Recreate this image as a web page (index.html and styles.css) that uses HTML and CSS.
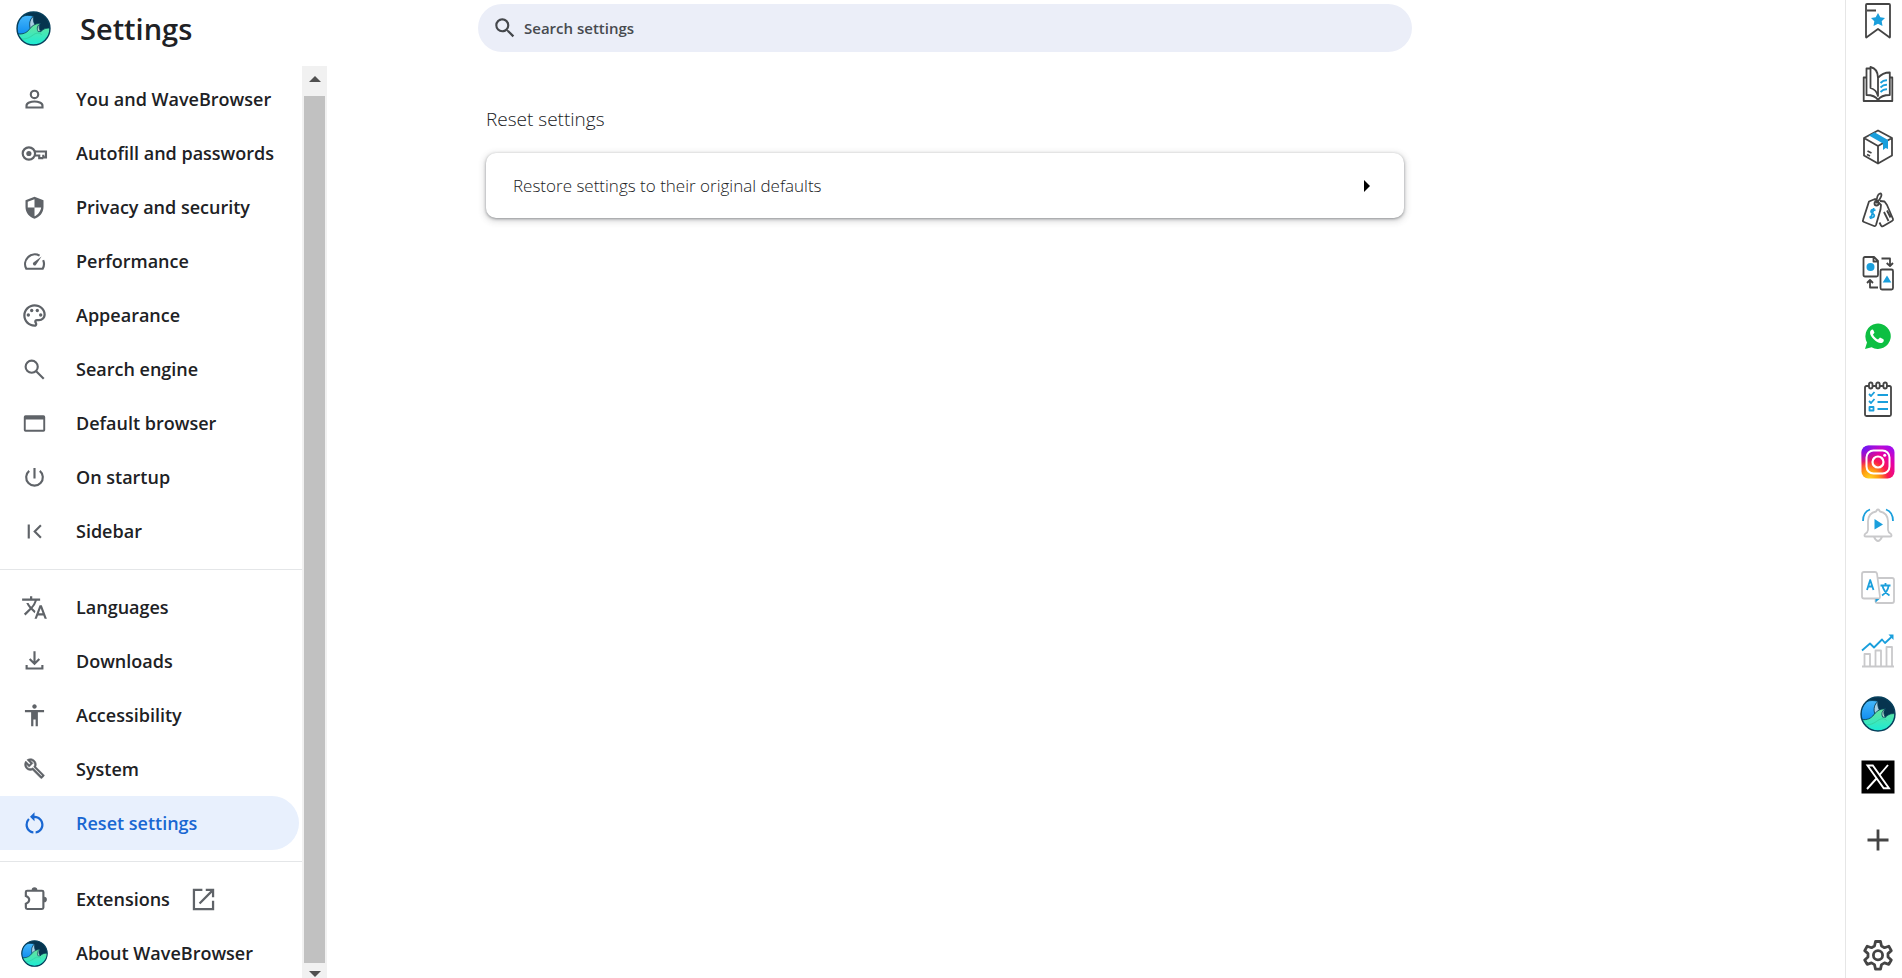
FILE: index.html
```html
<!DOCTYPE html>
<html lang="en">
<head>
  <meta charset="UTF-8" />
  <meta name="viewport" content="width=device-width, initial-scale=1" />
  <title>Settings - Reset settings</title>
  <link rel="stylesheet" href="styles.css">
</head>
<body>

  <!-- Shared logo, used in header, menu and rail -->
  <svg class="defs" width="0" height="0" aria-hidden="true">
    <defs>
      <linearGradient id="waveBlue" x1="0" y1="0" x2="0" y2="1">
        <stop offset="0" stop-color="#45b8fb" />
        <stop offset="1" stop-color="#0f8cf0" />
      </linearGradient>
      <linearGradient id="waveGreen" x1="0" y1="0" x2="0" y2="1">
        <stop offset="0" stop-color="#6be39a" />
        <stop offset="1" stop-color="#17ecd8" />
      </linearGradient>
      <clipPath id="waveClip"><circle cx="17" cy="17" r="16" /></clipPath>
      <symbol id="wave" viewBox="0 0 34 34">
        <circle cx="17" cy="17" r="16" fill="#06344f" />
        <g clip-path="url(#waveClip)" stroke="#07405c" stroke-width=".8">
          <path d="M0 23V12C3 5 9 3 17 5c-3 3-4 7-3 12l-4 5z" fill="url(#waveBlue)" />
          <path d="M17 5c-3.500 3-4.500 7-3 12l4.500-3.500c-1.500-2.500-2-5.500-1.500-8.500z" fill="#a9cfe2" />
          <path d="M0 22c5 1 9 0 12-3 3-4 6-7 12-7-2 2-2 5 0 8 3-3 6-4 11-3v17H0z" fill="url(#waveGreen)" />
          <path d="M24 12c-3.500 2-4 5-2.500 8l2.500 0c-2-3-2-6 0-8z" fill="#b5dfcc" />
          <path d="M3 27c6 1 10-1 14-4 3-2 6-2 8 0" fill="none" stroke="#35cf9e" />
        </g>
        <circle cx="17" cy="17" r="16" fill="none" stroke="#07405c" stroke-width="1.400" />
      </symbol>
    </defs>
  </svg>

  <div class="layout">

    <aside class="sidebar">
      <header class="brand">
        <svg class="brand-logo"><use href="#wave" /></svg>
        <h1>Settings</h1>
      </header>

      <div class="menu-wrap">
        <nav class="menu">
          <a class="item" href="#people">
            <svg viewBox="0 0 24 24" class="line"><circle cx="12" cy="7.500" r="3.300" /><path d="M4.900 19.100v-1.600c0-2.400 4-3.700 7.100-3.700s7.100 1.300 7.100 3.700v1.600z" /></svg>
            <span>You and WaveBrowser</span>
          </a>
          <a class="item" href="#autofill">
            <svg viewBox="0 0 24 24" class="line"><path d="M12.200 10.200H22.200v5.300h-2.400v-2.300M12.200 13.800h4v2.300h3.600" /><circle cx="7" cy="12" r="5.500" /><circle cx="7" cy="12" r="2.300" class="solid" /></svg>
            <span>Autofill and passwords</span>
          </a>
          <a class="item" href="#privacy">
            <svg viewBox="0 0 24 24"><path fill-rule="evenodd" d="M12 2.500 4 5.500v6c0 4.800 3.400 9.200 8 10.500 4.600-1.300 8-5.700 8-10.500v-6zM12 4.700V12H6V6.900zM12 12h5.900c-.5 3.400-2.800 6.600-5.900 7.800z" /></svg>
            <span>Privacy and security</span>
          </a>
          <a class="item" href="#performance">
            <svg viewBox="0 0 24 24" class="line"><path d="M16.500 6.800A8.600 8.600 0 0 0 4.700 18.400h14.600a8.600 8.600 0 0 0 .4-7.600" /><path class="solid" d="M18.300 7.500 13.200 15a1.500 1.500 0 0 1-2.200-2.100z" /></svg>
            <span>Performance</span>
          </a>
          <a class="item" href="#appearance">
            <svg viewBox="0 0 24 24"><path d="M12 22C6.490 22 2 17.510 2 12S6.490 2 12 2s10 4.040 10 9c0 3.310-2.690 6-6 6h-1.770c-.28 0-.5.22-.5.5 0 .12.05.23.13.33.41.47.64 1.060.64 1.670A2.500 2.500 0 0 1 12 22zm0-18c-4.410 0-8 3.590-8 8s3.590 8 8 8c.28 0 .5-.22.5-.5a.54.54 0 0 0-.14-.35c-.41-.46-.63-1.050-.63-1.650a2.500 2.500 0 0 1 2.500-2.500H16c2.210 0 4-1.790 4-4 0-3.860-3.590-7-8-7z" /><circle cx="6.500" cy="11.500" r="1.500" /><circle cx="9.500" cy="7.500" r="1.500" /><circle cx="14.500" cy="7.500" r="1.500" /><circle cx="17.500" cy="11.500" r="1.500" /></svg>
            <span>Appearance</span>
          </a>
          <a class="item" href="#search">
            <svg viewBox="0 0 24 24" class="line"><circle cx="9.500" cy="9.500" r="5.400" /><path d="m13.500 13.500 6.700 6.700" /></svg>
            <span>Search engine</span>
          </a>
          <a class="item" href="#defaultBrowser">
            <svg viewBox="0 0 24 24"><path fill-rule="evenodd" d="M4 4.700h16a1.500 1.500 0 0 1 1.500 1.500v11.600a1.500 1.500 0 0 1-1.500 1.500H4a1.500 1.500 0 0 1-1.500-1.500V6.200A1.500 1.500 0 0 1 4 4.700zM4.200 8.500v9.100h15.600V8.500z" /></svg>
            <span>Default browser</span>
          </a>
          <a class="item" href="#onStartup">
            <svg viewBox="0 0 24 24" class="line"><path d="M12 3.500v9.300M7.300 6.100a7.400 7.400 0 1 0 9.400 0" /></svg>
            <span>On startup</span>
          </a>
          <a class="item" href="#sidebar">
            <svg viewBox="0 0 24 24" class="line"><path d="M6.900 5.800v12.400M17.700 6.500 12.200 12l5.500 5.500" /></svg>
            <span>Sidebar</span>
          </a>

          <hr />

          <a class="item" href="#languages">
            <svg viewBox="0 0 24 24"><path d="M12.870 15.070l-2.540-2.510.03-.03A17.520 17.520 0 0 0 14.070 6H17V4h-7V2H8v2H1v1.990h11.170C11.500 7.920 10.440 9.750 9 11.350 8.070 10.320 7.300 9.190 6.690 8h-2c.73 1.630 1.730 3.170 2.980 4.560l-5.090 5.020L4 19l5-5 3.110 3.110.76-2.040zM18.500 10h-2L12 22h2l1.120-3h4.750L21 22h2l-4.500-12zm-2.620 7l1.620-4.330L19.120 17h-3.240z" /></svg>
            <span>Languages</span>
          </a>
          <a class="item" href="#downloads">
            <svg viewBox="0 0 24 24" class="line"><path d="M12 2.800v11M7.700 9.700l4.300 4.300 4.300-4.300M5 15.100v3.100h14v-3.100" /></svg>
            <span>Downloads</span>
          </a>
          <a class="item" href="#accessibility">
            <svg viewBox="0 0 24 24"><path d="M12 2c1.100 0 2 .9 2 2s-.9 2-2 2-2-.9-2-2 .9-2 2-2zm8.500 7H15v12.500h-2v-6h-2v6H9V9H3.500V7h17v2z" /></svg>
            <span>Accessibility</span>
          </a>
          <a class="item" href="#system">
            <svg viewBox="-3 -2 30 30"><path d="M22.610 18.990l-9.080-9.080c.93-2.340.45-5.100-1.440-7C9.790.61 6.210.4 3.660 2.260L7.500 6.110 6.080 7.520 2.250 3.690C.39 6.230.6 9.820 2.900 12.110c1.860 1.860 4.570 2.350 6.890 1.480l9.110 9.110c.39.39 1.020.39 1.410 0l2.300-2.300c.4-.38.4-1.010 0-1.410zm-3 1.600l-9.460-9.460c-.61.45-1.290.72-2 .82-1.360.2-2.790-.21-3.830-1.250C3.370 9.760 2.930 8.500 3 7.260l3.090 3.090 4.240-4.240-3.090-3.090c1.240-.07 2.490.37 3.440 1.310 1.080 1.080 1.490 2.570 1.240 3.960-.12.71-.42 1.370-.88 1.960l9.450 9.450-.88.89z" stroke="currentColor" stroke-width=".6" /></svg>
            <span>System</span>
          </a>
          <a class="item active" href="#reset" aria-current="page">
            <svg viewBox="0 0 24 24"><path d="M12 5V2L8 6l4 4V7c3.310 0 6 2.690 6 6 0 2.970-2.170 5.430-5 5.910v2.020c3.950-.49 7-3.850 7-7.930 0-4.420-3.580-8-8-8zM6 13c0-1.650.67-3.150 1.760-4.240L6.340 7.340A8.014 8.014 0 0 0 4 13c0 4.080 3.050 7.440 7 7.930v-2.020c-2.830-.48-5-2.940-5-5.910z" /></svg>
            <span>Reset settings</span>
          </a>

          <hr />

          <a class="item" href="#extensions">
            <svg viewBox="0 0 24 24" class="line"><path d="M5.500 4.200h13.200c.8 0 1.200.4 1.200 1.200v13.800c0 .8-.4 1.200-1.200 1.200H5.500c-.8 0-1.200-.4-1.200-1.200v-3.500c4-1.300 4-5.500 0-6.800V5.400c0-.8.4-1.200 1.200-1.200z" /><path class="solid" d="M9.500 3.600a2.500 2.500 0 0 1 5 0zM20.500 9.500a2.500 2.500 0 0 1 0 5z" /></svg>
            <span>Extensions</span>
            <svg viewBox="0 0 24 24" class="line external"><path d="M11 3.500H3.500v17h17V13M14 3.500h6.500V10M20.300 3.700 8.500 15.500" /></svg>
          </a>
          <a class="item" href="#about">
            <svg><use href="#wave" /></svg>
            <span>About WaveBrowser</span>
          </a>
        </nav>

        <div class="scrollbar">
          <button type="button" aria-label="Scroll up"><svg viewBox="0 0 12 6"><path d="M0 6 6 0l6 6z" /></svg></button>
          <div class="thumb"></div>
          <button type="button" class="down" aria-label="Scroll down"><svg viewBox="0 0 12 6"><path d="M0 0h12L6 6z" /></svg></button>
        </div>
      </div>
    </aside>

    <main class="content">
      <label class="search">
        <svg viewBox="0 0 24 24"><path d="M15.500 14h-.79l-.28-.27A6.471 6.471 0 0 0 16 9.500 6.500 6.500 0 1 0 9.500 16c1.610 0 3.090-.59 4.230-1.570l.27.28v.79l5 4.990L20.490 19l-4.990-5zm-6 0C7.010 14 5 11.990 5 9.500S7.010 5 9.500 5 14 7.010 14 9.500 11.990 14 9.500 14z" /></svg>
        <input type="search" placeholder="Search settings" aria-label="Search settings" />
      </label>

      <section class="section">
        <h2>Reset settings</h2>
        <button type="button" class="card">
          <span>Restore settings to their original defaults</span>
          <svg viewBox="0 0 5 10"><path d="M0 0l5 5-5 5z" /></svg>
        </button>
      </section>
    </main>

    <aside class="rail">
      <button type="button" aria-label="Bookmarks">
        <svg viewBox="0 0 36 36" class="dark"><path d="M7 1h22q1 0 1 1v32q0 1-1 0L18 26 7 34q-1 1-1 0V2q0-1 1-1zM7 7.500h9" /><path class="blue" d="m18 10 2.300 4.200 4.700.8-3.300 3.300.8 4.700-4.500-2.200-4.500 2.200.8-4.700L11 15l4.700-.8z" /></svg>
      </button>
      <button type="button" aria-label="Reading list">
        <svg viewBox="0 0 36 36" class="dark"><path d="M6.500 11.500H3.700V35h28.600V11.500h-2.500M10 2.500H6.500V29c6 0 9 1 11.500 5 2.500-4 6-5 11.800-5V6.500c-6 0-9 2-11.800 5.500 0-6-3-10-7.500-11V22c3.500 1 6.500 4 7.500 8V12" /><path class="blue-line" d="M20.500 17q3-3 6.500-2.700M20.500 21.500q3-3 6.500-2.700M20.500 26q3-3 6.500-2.700" /></svg>
      </button>
      <button type="button" aria-label="Package tracker">
        <svg viewBox="0 0 36 36" class="dark"><path d="M18 1.500 32 9v17.500L18 34.500 4 26.500V9zM4 9l14 8 14-8M18 17v17.500M7.500 22l4 2M7 25.500l3 1.500" /><path class="blue" d="m9 6.500 5.500-3.200L28 11v9l-2.300-1-2.700 2v-6.500z" /></svg>
      </button>
      <button type="button" aria-label="Deals">
        <svg viewBox="0 0 36 36" class="dark"><path d="m9 9.500 6-2.500 6 6-.5 4.500L16 33q-.6 1.500-2 1L4 30q-1.500-.6-1-2zM20 9l4.500.5L27 13l6 14q.4 1.300-1 2l-9 5.200q-1.500.6-2-.7l-1.500-3M24 20l4.500 9M27 18.500l3.500 7" /><circle cx="16.500" cy="11.500" r="2" /><path d="M16.500 11.500c0-4 0-9 3.500-10 3 0 1 5-3 9" /><path class="blue-line" d="M15.500 18.500q-4-2-4.500.8c0 2.500 3.500 2 3.300 4.500-.5 2.500-3.300 2-4.800.7M14 16.200 10.500 27" /></svg>
      </button>
      <button type="button" aria-label="File converter">
        <svg viewBox="0 0 36 36" class="dark"><path d="M5 2h9l4 4v14q0 1.500-1.500 1.500H5Q3.500 21.500 3.500 20V3.500Q3.500 2 5 2zM13.500 2v4.500H18M24.500 14.500h7q1.500 0 1.500 1.500v17q0 1.500-1.500 1.500H22q-1.500 0-1.500-1.500V16q0-1.500 1.500-1.500zM21.500 3.500H30v7.500M26.700 8l3.300 3 3-3M18 32.500H10V25M7 28l3-3 3 3" /><circle class="blue" cx="10.500" cy="12" r="4" /><path class="blue" d="m27 20.500 4.300 7h-8.600z" /></svg>
      </button>
      <button type="button" aria-label="WhatsApp">
        <svg viewBox="0 0 36 36"><path d="M5 31 7 24.500A12.700 12.700 0 1 1 11.600 29.200z" fill="#0dbf42" /><path d="M12 11.500c-3 1.500-2.500 5.500 1.500 9.500s8 5.500 10 2.500c.6-1.500.4-2-.5-2.500l-3-1.500-2 2c-2-.7-4-2.700-5-5l1.500-1.700-1.200-2.800c-.3-.6-.8-.7-1.300-.5z" fill="#fff" /></svg>
      </button>
      <button type="button" aria-label="To-do list">
        <svg viewBox="0 0 36 36" class="dark"><path d="M9 5H6.500Q5 5 5 6.500v27Q5 35 6.500 35h23q1.500 0 1.500-1.500v-27Q31 5 29.500 5H27M13 5h3M20 5h3" /><rect x="9" y="1.500" width="3.500" height="6" rx="1.700" /><rect x="16.200" y="1.500" width="3.500" height="6" rx="1.700" /><rect x="23.400" y="1.500" width="3.500" height="6" rx="1.700" /><path class="blue-line" d="m9 13 2 2 3.500-4M9 20l2 2 3.500-4M9.500 26h4v3.500h-4zM17.500 14H28M17.500 21H28M17.500 28H28" /></svg>
      </button>
      <button type="button" aria-label="Instagram">
        <svg viewBox="0 0 36 36">
          <defs>
            <radialGradient id="insta" cx=".25" cy="1" r="1.100">
              <stop offset="0" stop-color="#ffd51f" />
              <stop offset=".25" stop-color="#ff9a10" />
              <stop offset=".5" stop-color="#f9194f" />
              <stop offset=".75" stop-color="#e600a5" />
              <stop offset="1" stop-color="#a80ce8" />
            </radialGradient>
            <radialGradient id="instaBlue" cx="0" cy="0" r=".6">
              <stop offset="0" stop-color="#5b1cff" />
              <stop offset="1" stop-color="#5b1cff" stop-opacity="0" />
            </radialGradient>
          </defs>
          <rect x="1.500" y="1.500" width="33" height="33" rx="7" fill="url(#insta)" />
          <rect x="1.500" y="1.500" width="33" height="33" rx="7" fill="url(#instaBlue)" />
          <rect x="6.500" y="6.500" width="23" height="23" rx="7" fill="none" stroke="#fff" stroke-width="2" />
          <circle cx="18" cy="18" r="5.500" fill="none" stroke="#fff" stroke-width="2.200" />
          <circle cx="24.700" cy="11.300" r="1.500" fill="#fff" />
        </svg>
      </button>
      <button type="button" aria-label="Video alerts">
        <svg viewBox="0 0 36 36" class="pale"><path d="M16 4.500q2-4 4 0 7.500 1.500 8 9.500v9q.2 2.500 3 4 1.500 2.500-1 2.500H6q-2.500 0-1-2.500 2.800-1.500 3-4v-9q.5-8 8-9.500zM14 30q4 8 8 0" /><path class="blue" d="m14.500 12 8.500 5.500-8.500 5z" /><path class="blue-line" d="M3 14Q3 5 10 2.500M33 14q0-9-7-11.500" /></svg>
      </button>
      <button type="button" aria-label="Translate">
        <svg viewBox="0 0 36 36" class="pale"><path d="M4 2h11q1.500 0 2 1.500L20 27q0 1.500-1.500 1.500H4q-2 0-2-2V4q0-2 2-2zM17.500 8H32q2 0 2 2v21q0 2-2 2H17q-1.500 0-1.500-1.500v-3" /><path class="blue" d="M15.500 29h4l-4 3.500z" /><path class="blue-line" d="M7 20l3.200-10L13.500 20M8 16.500h4.500M20.500 15.500h10M25.500 13v2.500M22 25.500q6-4 6.500-9.500M22.500 16q1.500 6 7 9.500" /></svg>
      </button>
      <button type="button" aria-label="Stocks">
        <svg viewBox="0 0 36 36" class="pale"><path d="M2 33.500h32M4.500 33V21H10v12M15.500 33V17.500H21V33M26.500 33V14H32v19" /><path class="blue-line" d="m2 17.500 8-7 4 4 8-8 3 3.500 7.500-7" /><path class="blue" d="M28.500 1.500h5v5.500z" /></svg>
      </button>
      <button type="button" aria-label="Wave">
        <svg><use href="#wave" /></svg>
      </button>
      <button type="button" aria-label="X">
        <svg viewBox="0 0 36 36"><path d="M1.500 1.500h33v33h-33z" /><path d="M7.500 6.500h5.300L29 29.300h-5.300zM28 6 19.500 16M16.500 19.500 7 30" fill="none" stroke="#fff" stroke-width="1.900" /></svg>
      </button>
      <button type="button" aria-label="Add">
        <svg viewBox="0 0 36 36" class="plus"><path d="M18 7.500v21M7.500 18h21" /></svg>
      </button>
      <button type="button" class="gear" aria-label="Sidebar settings">
        <svg viewBox="0 0 36 36" class="plus"><path d="m15.500 4.500h5l1 4.500 3 1.700 4.300-1.500 2.500 4.400-3.300 3v3.400l3.300 3-2.500 4.400-4.300-1.500-3 1.700-1 4.500h-5l-1-4.500-3-1.700-4.300 1.500-2.500-4.400 3.300-3v-3.400l-3.300-3 2.500-4.400 4.300 1.500 3-1.700z" /><circle cx="18" cy="18.300" r="4.600" /></svg>
      </button>
    </aside>

  </div>

</body>
</html>
```
FILE: styles.css
```css
body {
  margin: 0;
  background-color: #fff;
  color: #202124;
  font-family: "Open Sans", "Noto Sans", sans-serif;
  overflow: hidden;
}
button {
  padding: 0;
  border: none;
  background: none;
  color: inherit;
  font-family: inherit;
  cursor: pointer;
}
.defs {
  position: absolute;
}
.layout {
  display: flex;
  height: 100vh;
}

/* left menu */
.sidebar {
  display: flex;
  flex-direction: column;
  flex: none;
  width: 327px;
}
.brand {
  display: flex;
  align-items: center;
  gap: 29px;
  box-sizing: border-box;
  height: 66px;
  padding: 0 0 10px 16px;
}
.brand-logo {
  width: 35px;
  height: 35px;
}
.brand h1 {
  margin: 0;
  font-size: 29px;
  font-weight: 600;
}
.menu-wrap {
  display: flex;
  flex: 1;
  min-height: 0;
}
.menu {
  flex: 1;
  padding-top: 6px;
  overflow: hidden;
}
.menu hr {
  margin: 11px 0 10px;
  border: none;
  border-top: 1px solid #e4e6e8;
}
.item {
  display: flex;
  align-items: center;
  gap: 28px;
  height: 54px;
  margin-right: 3px;
  padding-left: 21px;
  border-radius: 0 27px 27px 0;
  color: #202124;
  font-size: 18px;
  font-weight: 550;
  text-decoration: none;
}
.item svg {
  width: 27px;
  height: 27px;
  fill: #5f6368;
  color: #5f6368;
}
.item .line {
  fill: none;
  stroke: #5f6368;
  stroke-width: 1.9;
}
.item .solid {
  fill: #5f6368;
  stroke: none;
}
.item .external {
  margin-left: -8px;
  stroke-width: 2;
}
.item.active {
  background-color: #e8f0fd;
  color: #1967d2;
}
.item.active svg {
  fill: #1967d2;
}

.scrollbar {
  display: flex;
  flex-direction: column;
  width: 25px;
  background-color: #f1f1f1;
}
.scrollbar button {
  height: 30px;
  padding-bottom: 4px;
}
.scrollbar .down {
  height: 15px;
  padding: 6px 0 0;
}
.scrollbar svg {
  display: block;
  width: 12px;
  height: 6px;
  margin: 0 auto;
  fill: #505050;
}
.thumb {
  flex: 1;
  margin: 0 2px;
  background-color: #c1c1c1;
}

/* main column */
.content {
  flex: 1;
  padding: 4px 24px 0 151px;
}
.search {
  display: flex;
  align-items: center;
  gap: 6px;
  box-sizing: border-box;
  max-width: 934px;
  height: 48px;
  padding: 0 14px;
  border-radius: 24px;
  background-color: #ebeef8;
}
.search svg {
  width: 26px;
  height: 26px;
  fill: #44474b;
}
.search input {
  flex: 1;
  padding: 0;
  border: none;
  outline: none;
  background: none;
  color: #202124;
  font-family: inherit;
  font-size: 15px;
  font-weight: 600;
}
.search input::placeholder {
  color: #474a4f;
}
.section {
  max-width: 918px;
  margin: 54px 8px 0;
}
.section h2 {
  margin: 0;
  font-size: 19px;
  font-weight: 350;
  line-height: 26px;
}
.card {
  display: flex;
  align-items: center;
  justify-content: space-between;
  width: 100%;
  height: 65px;
  margin-top: 21px;
  padding: 0 34px 0 27px;
  border-radius: 10px;
  background-color: #fff;
  box-shadow: 0 1px 3px rgba(60, 64, 67, 0.5), 0 2px 6px 2px rgba(60, 64, 67, 0.16);
  font-size: 17px;
  font-weight: 350;
}
.card svg {
  width: 6px;
  height: 12px;
}

/* right app rail */
.rail {
  display: flex;
  flex-direction: column;
  align-items: center;
  gap: 27px;
  flex: none;
  box-sizing: border-box;
  width: 57px;
  padding: 3px 0 5px 8px;
  border-left: 1px solid #e6e6e6;
}
.rail button, .rail svg {
  display: block;
  width: 36px;
  height: 36px;
}
.rail .dark, .rail .pale, .rail .plus {
  fill: none;
  stroke: #444;
  stroke-width: 1.8;
  stroke-linejoin: round;
}
.rail .pale {
  stroke: #c9c9cb;
}
.rail .plus {
  stroke-width: 2.8;
}
.rail .blue {
  fill: #1a9fdc;
  stroke: none;
}
.rail .blue-line {
  stroke: #1a9fdc;
}
.rail .gear {
  margin-top: auto;
}
```
